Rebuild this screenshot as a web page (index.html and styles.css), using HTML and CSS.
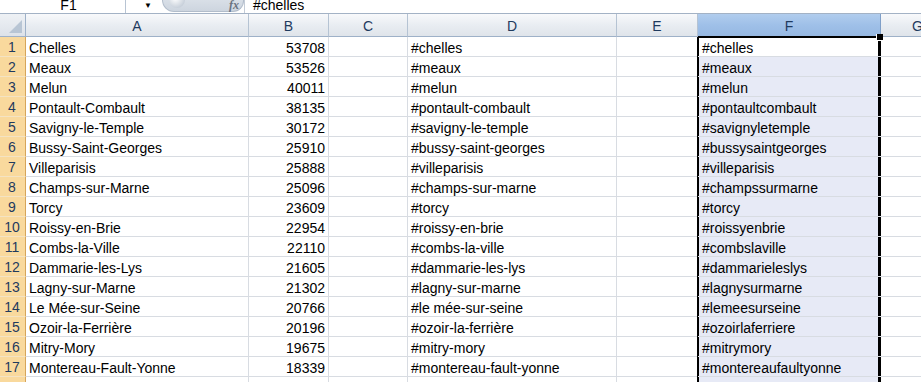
FILE: index.html
```html
<!DOCTYPE html>
<html lang="fr">
<head>
  <meta charset="UTF-8">
  <title>Classeur - Villes</title>
  <link rel="stylesheet" href="styles.css">
</head>
<body>
  <!-- barre de formule -->
  <div class="formulaBar">
    <div class="nameBox">F1</div>
    <div class="nameArrow">&#9660;</div>
    <div class="fxPill">
      <span class="pillKnob"></span>
      <span class="fx">fx</span>
    </div>
    <div class="formulaInput">#chelles</div>
  </div>

  <!-- feuille -->
  <div class="sheet">
    <div class="corner"></div>
    <div class="colHead">A</div>
    <div class="colHead">B</div>
    <div class="colHead">C</div>
    <div class="colHead">D</div>
    <div class="colHead">E</div>
    <div class="colHead sel">F</div>
    <div class="colHead">G</div>

    <div class="rowHead">1</div><div class="cell">Chelles</div><div class="cell num">53708</div><div class="cell"></div><div class="cell">#chelles</div><div class="cell"></div><div class="cell fcell active">#chelles<span class="fillHandle"></span></div><div class="cell"></div>
    <div class="rowHead">2</div><div class="cell">Meaux</div><div class="cell num">53526</div><div class="cell"></div><div class="cell">#meaux</div><div class="cell"></div><div class="cell fcell">#meaux</div><div class="cell"></div>
    <div class="rowHead">3</div><div class="cell">Melun</div><div class="cell num">40011</div><div class="cell"></div><div class="cell">#melun</div><div class="cell"></div><div class="cell fcell">#melun</div><div class="cell"></div>
    <div class="rowHead">4</div><div class="cell">Pontault-Combault</div><div class="cell num">38135</div><div class="cell"></div><div class="cell">#pontault-combault</div><div class="cell"></div><div class="cell fcell">#pontaultcombault</div><div class="cell"></div>
    <div class="rowHead">5</div><div class="cell">Savigny-le-Temple</div><div class="cell num">30172</div><div class="cell"></div><div class="cell">#savigny-le-temple</div><div class="cell"></div><div class="cell fcell">#savignyletemple</div><div class="cell"></div>
    <div class="rowHead">6</div><div class="cell">Bussy-Saint-Georges</div><div class="cell num">25910</div><div class="cell"></div><div class="cell">#bussy-saint-georges</div><div class="cell"></div><div class="cell fcell">#bussysaintgeorges</div><div class="cell"></div>
    <div class="rowHead">7</div><div class="cell">Villeparisis</div><div class="cell num">25888</div><div class="cell"></div><div class="cell">#villeparisis</div><div class="cell"></div><div class="cell fcell">#villeparisis</div><div class="cell"></div>
    <div class="rowHead">8</div><div class="cell">Champs-sur-Marne</div><div class="cell num">25096</div><div class="cell"></div><div class="cell">#champs-sur-marne</div><div class="cell"></div><div class="cell fcell">#champssurmarne</div><div class="cell"></div>
    <div class="rowHead">9</div><div class="cell">Torcy</div><div class="cell num">23609</div><div class="cell"></div><div class="cell">#torcy</div><div class="cell"></div><div class="cell fcell">#torcy</div><div class="cell"></div>
    <div class="rowHead">10</div><div class="cell">Roissy-en-Brie</div><div class="cell num">22954</div><div class="cell"></div><div class="cell">#roissy-en-brie</div><div class="cell"></div><div class="cell fcell">#roissyenbrie</div><div class="cell"></div>
    <div class="rowHead">11</div><div class="cell">Combs-la-Ville</div><div class="cell num">22110</div><div class="cell"></div><div class="cell">#combs-la-ville</div><div class="cell"></div><div class="cell fcell">#combslaville</div><div class="cell"></div>
    <div class="rowHead">12</div><div class="cell">Dammarie-les-Lys</div><div class="cell num">21605</div><div class="cell"></div><div class="cell">#dammarie-les-lys</div><div class="cell"></div><div class="cell fcell">#dammarieleslys</div><div class="cell"></div>
    <div class="rowHead">13</div><div class="cell">Lagny-sur-Marne</div><div class="cell num">21302</div><div class="cell"></div><div class="cell">#lagny-sur-marne</div><div class="cell"></div><div class="cell fcell">#lagnysurmarne</div><div class="cell"></div>
    <div class="rowHead">14</div><div class="cell">Le Mée-sur-Seine</div><div class="cell num">20766</div><div class="cell"></div><div class="cell">#le mée-sur-seine</div><div class="cell"></div><div class="cell fcell">#lemeesurseine</div><div class="cell"></div>
    <div class="rowHead">15</div><div class="cell">Ozoir-la-Ferrière</div><div class="cell num">20196</div><div class="cell"></div><div class="cell">#ozoir-la-ferrière</div><div class="cell"></div><div class="cell fcell">#ozoirlaferriere</div><div class="cell"></div>
    <div class="rowHead">16</div><div class="cell">Mitry-Mory</div><div class="cell num">19675</div><div class="cell"></div><div class="cell">#mitry-mory</div><div class="cell"></div><div class="cell fcell">#mitrymory</div><div class="cell"></div>
    <div class="rowHead">17</div><div class="cell">Montereau-Fault-Yonne</div><div class="cell num">18339</div><div class="cell"></div><div class="cell">#montereau-fault-yonne</div><div class="cell"></div><div class="cell fcell">#montereaufaultyonne</div><div class="cell"></div>
    <div class="rowHead"></div><div class="cell"></div><div class="cell num"></div><div class="cell"></div><div class="cell"></div><div class="cell"></div><div class="cell fcell"></div><div class="cell"></div>
  </div>
</body>
</html>
```

FILE: styles.css
```css
/* base */
body {
  margin: 0;
  padding: 0;
  background: #fff;
  font-family: 'Liberation Sans', Arial, sans-serif;
  font-size: 14px;
  color: #000;
  overflow: hidden;
}

/* barre de formule (coupée en haut) */
.formulaBar {
  display: flex;
  height: 13px;
  overflow: hidden;
  border-bottom: 1px solid #a3b2c5;
  background: #fff;
}
.nameBox {
  width: 126px;
  border-right: 1px solid #b8c4d3;
  text-align: center;
  line-height: 20px;
  margin-top: -5px;
  padding-left: 12px;
  box-sizing: border-box;
}
.nameArrow {
  width: 36px;
  font-size: 8px;
  line-height: 12px;
  text-align: center;
  padding-left: 8px;
  box-sizing: border-box;
}
.fxPill {
  position: relative;
  width: 82px;
  margin-top: -10px;
  height: 22px;
  border-radius: 0 0 11px 12px;
  background: linear-gradient(#e3e8ee, #cdd5df);
  border: 1px solid #b2bdcb;
  border-top: none;
  box-sizing: border-box;
}
.pillKnob {
  position: absolute;
  left: 6px;
  top: 2px;
  width: 16px;
  height: 16px;
  border-radius: 50%;
  background: radial-gradient(circle at 40% 40%, #fff, #c9d1db 70%);
}
.fx {
  position: absolute;
  right: 4px;
  top: 8px;
  font-family: 'Liberation Serif', serif;
  font-style: italic;
  font-weight: bold;
  font-size: 12px;
  color: #6a7380;
}
.formulaInput {
  flex: 1;
  border-left: 1px solid #c4ccd7;
  padding-left: 8px;
  line-height: 20px;
  margin-top: -5px;
}

/* grille */
.sheet {
  display: grid;
  grid-template-columns: 26px 223px 80px 79px 209px 81px 183px 74px;
  grid-template-rows: 23px;
  grid-auto-rows: 20px;
}
.corner {
  background: linear-gradient(#eef1f5, #dde2e9);
  border-right: 1px solid #9eb1c8;
  border-bottom: 1px solid #9eb1c8;
  position: relative;
}
.corner::after {
  content: "";
  position: absolute;
  right: 3px;
  bottom: 3px;
  border-left: 13px solid transparent;
  border-bottom: 13px solid #b8c5d4;
}
.colHead {
  background: linear-gradient(#f8f9fb, #e9edf2 50%, #dfe4ea);
  border-right: 1px solid #b5c3d3;
  border-bottom: 1px solid #9eb1c8;
  text-align: center;
  line-height: 24px;
  color: #1f3a5e;
}
.colHead.sel {
  background: linear-gradient(#b1cdee, #9fc0e8 50%, #96b8e2);
  border-right-color: #7f9fc8;
  border-bottom-color: #7f9fc8;
}
.rowHead {
  background: #f9d99d;
  border-right: 1px solid #d6a55a;
  border-bottom: 1px solid #f4e3c3;
  text-align: center;
  line-height: 19px;
  padding-top: 1px;
  color: #1f3a5e;
  padding-right: 1px;
}
.cell {
  border-right: 1px solid #d8dce2;
  border-bottom: 1px solid #d8dce2;
  padding: 2px 3px 0;
  line-height: 18px;
  white-space: nowrap;
}
.num {
  text-align: right;
  padding-right: 3px;
}

/* colonne F sélectionnée, avec son cadre noir */
.fcell {
  background: #e7eaf6;
  border-right: none;
  box-shadow: -1px 0 #000, inset 1px 0 #000, inset -3px 0 #000;
  padding-left: 4px;
}
.fcell.active {
  background: #fff;
  position: relative;
  box-shadow: -1px 0 #000, inset 1px 0 #000, inset -3px 0 #000, 0 -1px #000, inset 0 1px #000;
}
.fillHandle {
  position: absolute;
  top: -3px;
  right: -2px;
  width: 6px;
  height: 6px;
  background: #000;
  border-left: 1px solid #fff;
  border-bottom: 1px solid #fff;
  z-index: 2;
}
```
